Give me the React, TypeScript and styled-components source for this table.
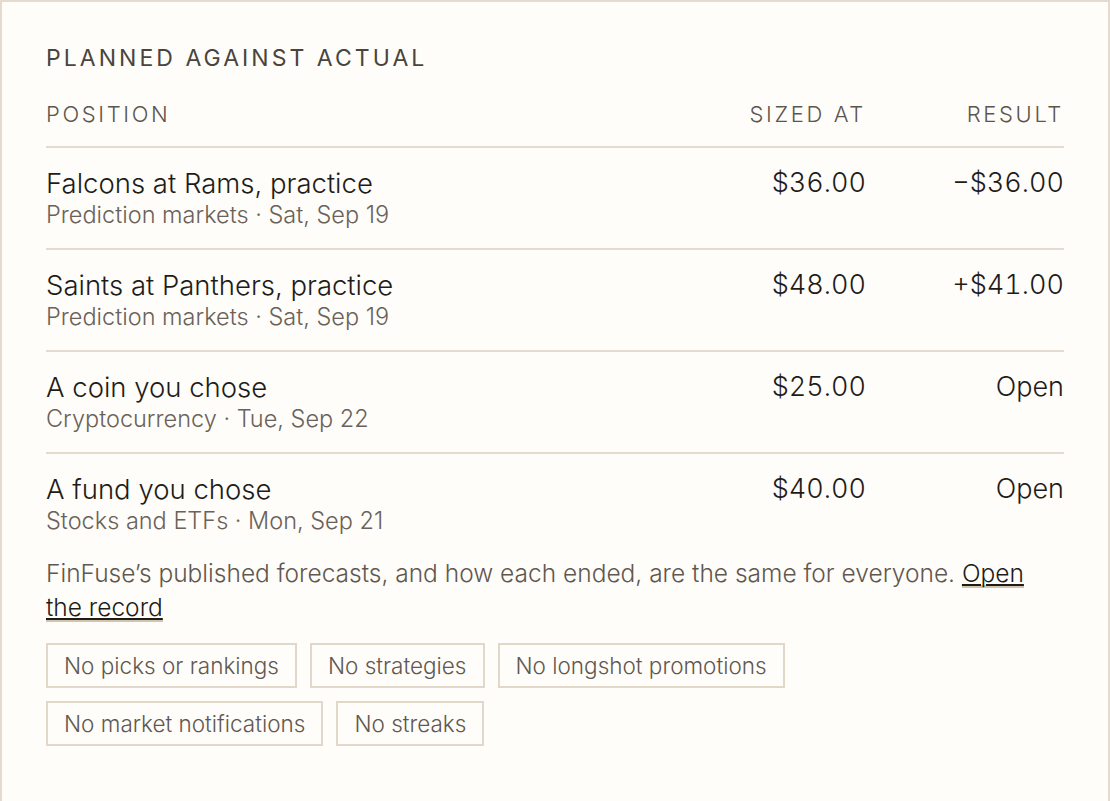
import React from "react";
import styled, { createGlobalStyle } from "styled-components";

const Global = createGlobalStyle`
  html, body { margin: 0; padding: 0; background: #fffdf9; }
  body { font-family: Inter, "Noto Sans", sans-serif; -webkit-font-smoothing: antialiased; }
  * { box-sizing: border-box; }
`;

const Card = styled.section`
  width: 1110px;
  min-height: 860px;
  border: 2px solid #e4dbce;
  background: #fffdf9;
  padding: 41px 44px 44px;
`;

const Title = styled.h2`
  margin: 0 0 26px;
  font-size: 23px;
  font-weight: 400;
  letter-spacing: 0.132em;
  color: #4a443d;
  line-height: 30px;
`;

const Grid = styled.div`
  display: grid;
  grid-template-columns: 1fr 198px 198px;
`;

const HeadCell = styled.div<{ $right?: boolean }>`
  font-size: 22px;
  font-weight: 300;
  letter-spacing: 0.12em;
  color: #5c554e;
  text-align: ${(p) => (p.$right ? "right" : "left")};
  line-height: 30px;
  padding-bottom: 17px;
  border-bottom: 2px solid #e4dbce;
`;

const Cell = styled.div<{ $right?: boolean; $last?: boolean }>`
  text-align: ${(p) => (p.$right ? "right" : "left")};
  padding: 18px 0 ${(p) => (p.$last ? "20px" : "18px")};
  border-bottom: ${(p) => (p.$last ? "none" : "2px solid #e4dbce")};
`;

const Name = styled.div`
  font-size: 27.5px;
  font-weight: 300;
  color: #1e1c19;
  line-height: 34px;
`;

const Meta = styled.div`
  font-size: 23.5px;
  font-weight: 300;
  color: #6a625a;
  line-height: 30px;
`;

const Amount = styled.div`
  font-size: 27px;
  font-weight: 300;
  font-variant-numeric: tabular-nums;
  color: #1e1c19;
  line-height: 34px;
`;

const Note = styled.p`
  margin: 0 0 19px;
  max-width: 1000px;
  font-size: 24.5px;
  font-weight: 300;
  color: #5f5850;
  line-height: 34px;
`;

const Link = styled.a`
  color: #1e1c19;
  font-weight: 350;
  text-decoration: underline;
  text-decoration-thickness: 2px;
  text-underline-offset: 2px;
  box-shadow: inset 0 -3px 0 #d3c4ae;
`;

const Chips = styled.ul`
  list-style: none;
  margin: 0;
  padding: 0;
  display: flex;
  flex-wrap: wrap;
  gap: 13px 13px;
  max-width: 760px;
`;

const Chip = styled.li`
  border: 2px solid #e2d8ca;
  padding: 0 16px;
  height: 45px;
  display: flex;
  align-items: center;
  font-size: 22.5px;
  font-weight: 300;
  color: #5f5850;
`;

const rows = [
  { name: "Falcons at Rams, practice", meta: "Prediction markets · Sat, Sep 19", size: "$36.00", result: "−$36.00" },
  { name: "Saints at Panthers, practice", meta: "Prediction markets · Sat, Sep 19", size: "$48.00", result: "+$41.00" },
  { name: "A coin you chose", meta: "Cryptocurrency · Tue, Sep 22", size: "$25.00", result: "Open" },
  { name: "A fund you chose", meta: "Stocks and ETFs · Mon, Sep 21", size: "$40.00", result: "Open" },
];

const chips = [
  "No picks or rankings",
  "No strategies",
  "No longshot promotions",
  "No market notifications",
  "No streaks",
];

export default function App() {
  return (
    <>
      <Global />
      <Card>
        <Title>PLANNED AGAINST ACTUAL</Title>
        <Grid>
          <HeadCell>POSITION</HeadCell>
          <HeadCell $right>SIZED AT</HeadCell>
          <HeadCell $right>RESULT</HeadCell>
          {rows.map((r, i) => {
            const last = i === rows.length - 1;
            return (
              <React.Fragment key={r.name}>
                <Cell $last={last}>
                  <Name>{r.name}</Name>
                  <Meta>{r.meta}</Meta>
                </Cell>
                <Cell $right $last={last}>
                  <Amount>{r.size}</Amount>
                </Cell>
                <Cell $right $last={last}>
                  <Amount>{r.result}</Amount>
                </Cell>
              </React.Fragment>
            );
          })}
        </Grid>
        <Note>
          FinFuse’s published forecasts, and how each ended, are the same for everyone.{" "}
          <Link href="#">Open the record</Link>
        </Note>
        <Chips>
          {chips.map((c) => (
            <Chip key={c}>{c}</Chip>
          ))}
        </Chips>
      </Card>
    </>
  );
}
